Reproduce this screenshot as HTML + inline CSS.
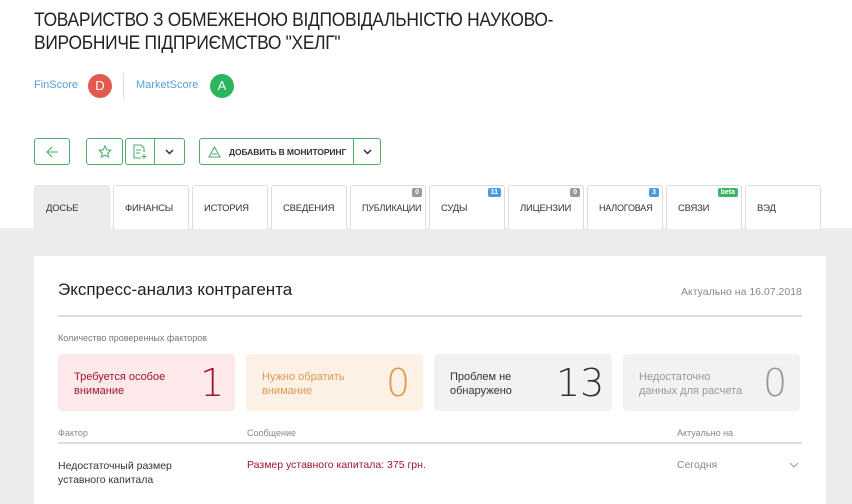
<!DOCTYPE html>
<html><head><meta charset="utf-8"><style>
*{box-sizing:border-box;margin:0;padding:0}
body{width:852px;height:504px;overflow:hidden;background:#fff;font-family:"Liberation Sans","DejaVu Sans",sans-serif;position:relative}
.a{position:absolute}
h1{position:absolute;left:34px;top:9px;font-size:19px;font-weight:normal;line-height:23px;color:#222;letter-spacing:-0.3px;transform:scaleX(0.915);transform-origin:left}
.sc{font-size:11px;color:#5a9fd4}
.circ{width:24px;height:24px;border-radius:12px;color:#fff;font-size:13px;text-align:center;line-height:24px}
.btn{position:absolute;border:1px solid #4caf6a;border-radius:3px;height:27px;top:138px;background:#fff}
.tab{position:absolute;top:185px;height:44px;width:76px;border:1px solid #ddd;border-bottom:none;border-radius:3px 3px 0 0;background:#fff;font-size:9.5px;color:#333;padding:17px 0 0 11px;letter-spacing:-0.2px;white-space:nowrap}
.badge{position:absolute;top:2px;right:3px;font-size:7px;color:#fff;border-radius:2px;padding:0 3px;line-height:9px;font-weight:bold;letter-spacing:0}
.gray{position:absolute;left:0;top:228px;width:852px;height:276px;background:#ececec}
.card{position:absolute;left:34px;top:256px;width:792px;height:248px;background:#fff}
.box{position:absolute;top:354px;height:57px;border-radius:4px;font-size:11px;line-height:14px;padding:16px 0 0 16px}
.num{position:absolute;top:7px;font-size:38px;font-family:"DejaVu Sans",sans-serif;font-weight:200;line-height:44px}
</style></head><body>
<h1>ТОВАРИСТВО З ОБМЕЖЕНОЮ ВІДПОВІДАЛЬНІСТЮ НАУКОВО-<br>ВИРОБНИЧЕ ПІДПРИЄМСТВО "ХЕЛГ"</h1>
<div class="a sc" style="left:34px;top:79px">FinScore</div>
<div class="a circ" style="left:88px;top:74px;background:#e05a4f">D</div>
<div class="a" style="left:123px;top:73px;width:1px;height:26px;background:#ddd"></div>
<div class="a sc" style="left:136px;top:79px">MarketScore</div>
<div class="a circ" style="left:210px;top:74px;background:#2db55d">A</div>

<div class="btn" style="left:34px;width:36px"><svg class="a" style="left:11px;top:7px" width="13" height="12" viewBox="0 0 13 12"><path d="M12 6H1M6 1L1 6l5 5" stroke="#4caf6a" fill="none" stroke-width="1.1"/></svg></div>
<div class="btn" style="left:86px;width:37px"><svg class="a" style="left:11px;top:6px" width="14" height="14" viewBox="0 0 14 14"><path d="M7 1l1.8 3.8 4 .5-3 2.8.8 4L7 10.1 3.4 12.1l.8-4-3-2.8 4-.5z" stroke="#4caf6a" fill="none" stroke-width="1.1"/></svg></div>
<div class="btn" style="left:125px;width:60px"><svg class="a" style="left:6px;top:5px" width="16" height="16" viewBox="0 0 16 16"><path d="M9 14H2V1h7l3 3v4M4 6h5M4 9h4M12 10v5M9.5 12.5h5" stroke="#4caf6a" fill="none" stroke-width="1.1"/></svg><div class="a" style="left:28px;top:0;width:1px;height:25px;background:#4caf6a"></div><svg class="a" style="left:39px;top:10px" width="9" height="6" viewBox="0 0 9 6"><path d="M1 1l3.5 3.5L8 1" stroke="#333" fill="none" stroke-width="1.5"/></svg></div>
<div class="btn" style="left:199px;width:182px"><svg class="a" style="left:8px;top:7px" width="13" height="12" viewBox="0 0 13 12"><path d="M6.5 1L12 11H1zM4 8h5" stroke="#4caf6a" fill="none" stroke-width="1.1"/></svg><div class="a" style="left:29px;top:8px;font-size:8.5px;color:#333;font-weight:bold;letter-spacing:-0.1px">ДОБАВИТЬ В МОНИТОРИНГ</div><div class="a" style="left:153px;top:0;width:1px;height:25px;background:#4caf6a"></div><svg class="a" style="left:163px;top:10px" width="9" height="6" viewBox="0 0 9 6"><path d="M1 1l3.5 3.5L8 1" stroke="#333" fill="none" stroke-width="1.5"/></svg></div>

<div class="gray"></div>
<div class="tab" style="left:34px;background:#ececec;border-color:#e4e4e4">ДОСЬЕ</div>
<div class="tab" style="left:113px">ФИНАНСЫ</div>
<div class="tab" style="left:192px">ИСТОРИЯ</div>
<div class="tab" style="left:271px">СВЕДЕНИЯ</div>
<div class="tab" style="left:350px;padding-left:11px;font-size:9px">ПУБЛИКАЦИИ<span class="badge" style="background:#999">0</span></div>
<div class="tab" style="left:429px">СУДЫ<span class="badge" style="background:#4a9be0">11</span></div>
<div class="tab" style="left:508px">ЛИЦЕНЗИИ<span class="badge" style="background:#999">0</span></div>
<div class="tab" style="left:587px;font-size:9px">НАЛОГОВАЯ<span class="badge" style="background:#4a9be0">3</span></div>
<div class="tab" style="left:666px">СВЯЗИ<span class="badge" style="background:#3cb563">beta</span></div>
<div class="tab" style="left:745px">ВЭД</div>

<div class="card"></div>
<div class="a" style="left:58px;top:280px;font-size:17px;color:#222">Экспресс-анализ контрагента</div>
<div class="a" style="left:681px;top:286px;font-size:10.5px;color:#888">Актуально на 16.07.2018</div>
<div class="a" style="left:58px;top:315px;width:744px;height:2px;background:#ddd"></div>
<div class="a" style="left:58px;top:333px;font-size:9px;color:#777">Количество проверенных факторов</div>

<div class="box" style="left:58px;width:177px;background:#fde9e9;color:#a2142e">Требуется особое<br>внимание<div class="num" style="left:142px">1</div></div>
<div class="box" style="left:246px;width:177px;background:#fdf0e4;color:#dc9a52">Нужно обратить<br>внимание<div class="num" style="left:140px">0</div></div>
<div class="box" style="left:434px;width:178px;background:#f2f2f2;color:#333">Проблем не<br>обнаружено<div class="num" style="left:122px">13</div></div>
<div class="box" style="left:623px;width:177px;background:#f2f2f2;color:#999">Недостаточно<br>данных для расчета<div class="num" style="left:140px">0</div></div>

<div class="a" style="left:58px;top:428px;font-size:9px;color:#888">Фактор</div>
<div class="a" style="left:247px;top:428px;font-size:9px;color:#888">Сообщение</div>
<div class="a" style="left:677px;top:428px;font-size:9px;color:#888">Актуально на</div>
<div class="a" style="left:58px;top:442px;width:744px;height:2px;background:#ddd"></div>
<div class="a" style="left:58px;top:459px;font-size:10.5px;line-height:14px;color:#333">Недостаточный размер<br>уставного капитала</div>
<div class="a" style="left:247px;top:459px;font-size:10.5px;color:#a2142e">Размер уставного капитала: 375 грн.</div>
<div class="a" style="left:677px;top:459px;font-size:10.5px;color:#888">Сегодня</div>
<svg class="a" style="left:789px;top:462px" width="10" height="7" viewBox="0 0 10 7"><path d="M1 1l4 4 4-4" stroke="#999" fill="none" stroke-width="1"/></svg>
</body></html>
